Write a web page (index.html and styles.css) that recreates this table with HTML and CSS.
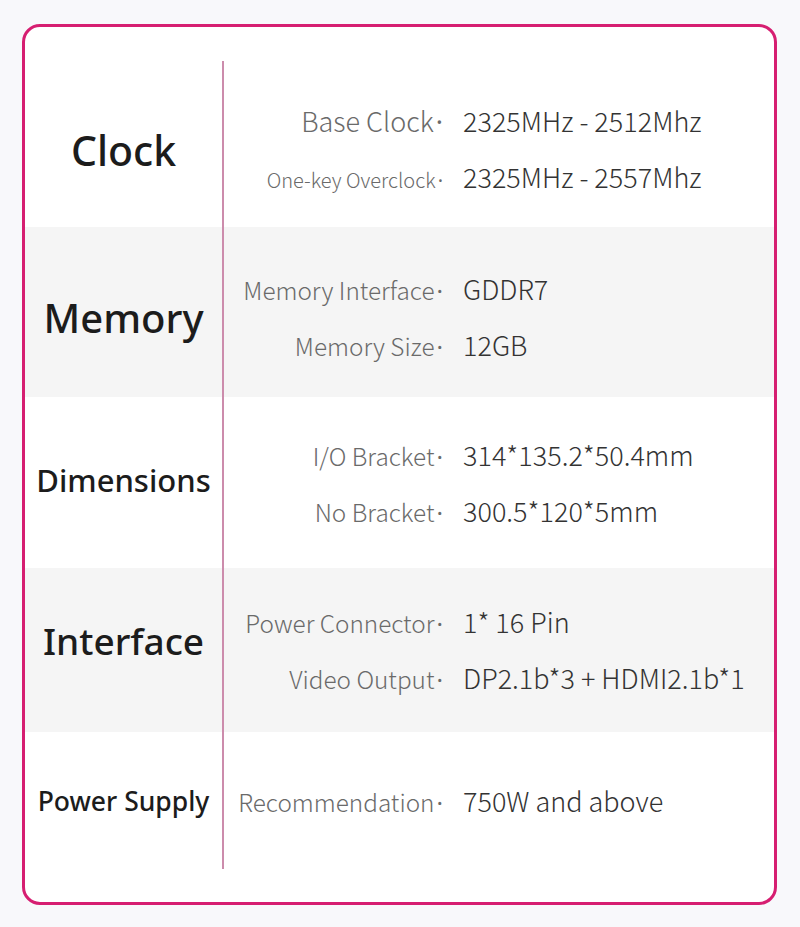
FILE: index.html
```html
<!DOCTYPE html>
<html lang="en">
<head>
<meta charset="utf-8">
<title>Specs</title>
<link rel="stylesheet" href="styles.css">
</head>
<body>
<div class="card">
  <div class="spec">
    <div class="row r1">
      <div class="cat cat-clock">Clock</div>
      <div class="items">
        <div class="item"><span class="label label-lg">Base Clock</span><span class="value">2325MHz - 2512Mhz</span></div>
        <div class="item"><span class="label label-sm">One-key Overclock</span><span class="value">2325MHz - 2557Mhz</span></div>
      </div>
    </div>
    <div class="row r2 grey">
      <div class="cat cat-memory">Memory</div>
      <div class="items">
        <div class="item"><span class="label">Memory Interface</span><span class="value">GDDR7</span></div>
        <div class="item"><span class="label">Memory Size</span><span class="value">12GB</span></div>
      </div>
    </div>
    <div class="row r3">
      <div class="cat cat-dim">Dimensions</div>
      <div class="items">
        <div class="item"><span class="label">I/O Bracket</span><span class="value">314*135.2*50.4mm</span></div>
        <div class="item"><span class="label">No Bracket</span><span class="value">300.5*120*5mm</span></div>
      </div>
    </div>
    <div class="row r4 grey">
      <div class="cat cat-if">Interface</div>
      <div class="items">
        <div class="item"><span class="label">Power Connector</span><span class="value">1* 16 Pin</span></div>
        <div class="item"><span class="label">Video Output</span><span class="value">DP2.1b*3 + HDMI2.1b*1</span></div>
      </div>
    </div>
    <div class="row r5">
      <div class="cat cat-ps">Power Supply</div>
      <div class="items">
        <div class="item"><span class="label">Recommendation</span><span class="value">750W and above</span></div>
      </div>
    </div>
  </div>
</div>
</body>
</html>
```

FILE: styles.css
```css
html, body {
  margin: 0;
  padding: 0;
}
body {
  background: #f8f8fb;
  width: 800px;
  height: 927px;
  padding-top: 24px;
  box-sizing: border-box;
}
.card {
  margin-left: 22px;
  width: 755px;
  height: 881px;
  box-sizing: border-box;
  border: 3px solid #d61e71;
  border-radius: 18px;
  background: #ffffff;
  padding-top: 34px;
  overflow: hidden;
}
.row {
  display: grid;
  grid-template-columns: 197px 1fr;
}
.row.grey {
  background: #f5f5f5;
}
.r1 { height: 166px; }
.r2 { height: 170px; }
.r3 { height: 171px; }
.r4 { height: 164px; }
.r5 { height: 137px; }

.cat {
  display: flex;
  align-items: center;
  justify-content: center;
  font-family: "Noto Sans", "Open Sans", sans-serif;
  font-weight: 500;
  color: #1c1c1c;
  white-space: nowrap;
}
.cat-clock { font-size: 41px; padding-top: 12px; }
.cat-memory { font-size: 40px; padding-top: 10px; }
.cat-dim { font-size: 31px; padding-bottom: 6px; }
.cat-if { font-size: 37px; padding-bottom: 20px; }
.cat-ps { font-size: 26.5px; }

.items {
  border-left: 2px solid #cc8cac;
  display: flex;
  flex-direction: column;
  justify-content: center;
  font-family: "Noto Sans CJK SC", "Noto Sans", sans-serif;
  font-weight: 300;
}
.r1 .items { padding-top: 10px; }
.r2 .items { padding-top: 10px; }
.item {
  display: grid;
  grid-template-columns: 219px 1fr;
  column-gap: 20px;
  align-items: baseline;
  height: 56px;
  line-height: 56px;
}
.label {
  text-align: right;
  color: #6a6a6a;
  font-size: 24.3px;
  white-space: nowrap;
}
.label::after {
  content: "·";
  margin-left: 2px;
  font-family: "Noto Sans", sans-serif;
  font-weight: 400;
}
.label.label-lg {
  font-size: 27px;
}
.label.label-sm {
  font-size: 20px;
}
.value {
  color: #333333;
  font-size: 27px;
  white-space: nowrap;
}
```
